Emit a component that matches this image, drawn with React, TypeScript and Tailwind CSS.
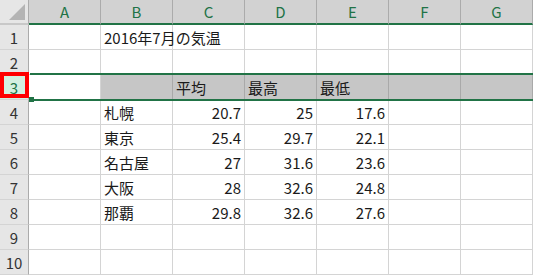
import React from "react";

const cols = ["A", "B", "C", "D", "E", "F", "G"];

type Row = (string | number | null)[];

const data: Row[] = [
  [null, "2016年7月の気温", null, null, null, null, null],
  [null, null, null, null, null, null, null],
  [null, null, "平均", "最高", "最低", null, null],
  [null, "札幌", 20.7, 25, 17.6, null, null],
  [null, "東京", 25.4, 29.7, 22.1, null, null],
  [null, "名古屋", 27, 31.6, 23.6, null, null],
  [null, "大阪", 28, 32.6, 24.8, null, null],
  [null, "那覇", 29.8, 32.6, 27.6, null, null],
  [null, null, null, null, null, null, null],
  [null, null, null, null, null, null, null],
];

export default function App() {
  return (
    <div
      className="relative w-[533px] h-[275px] overflow-hidden bg-white text-[15px] text-[#1a1a1a]"
      style={{ fontFamily: '"Noto Sans CJK JP", "Liberation Sans", sans-serif' }}
    >
      {/* column header */}
      <div className="flex h-[25px]">
        <div className="relative w-[29px] h-[25px] bg-[#e6e6e6] border-r border-b-2 border-r-[#ababab] border-b-[#c8c8c8]">
          <svg className="absolute left-0 top-0" width="28" height="23" viewBox="0 0 28 23">
            <polygon points="25,4 25,20 9,20" fill="#b4b4b4" />
          </svg>
        </div>
        {cols.map((c) => (
          <div
            key={c}
            className="w-[72px] h-[25px] bg-[#d2d2d2] border-r border-r-[#ababab] border-b-2 border-b-[#217346] flex items-center justify-center text-[#217346] leading-none"
          >
            {c}
          </div>
        ))}
      </div>

      {data.map((row, ri) => {
        const sel = ri === 2;
        return (
          <div key={ri} className="flex h-[25px]">
            <div
              className={
                sel
                  ? "w-[29px] h-[25px] shrink-0 bg-[#d3f0e0] border-r border-b border-r-[#ababab] border-b-[#d4d4d4] flex items-center justify-center text-[#217346] leading-none"
                  : "w-[29px] h-[25px] shrink-0 bg-[#e6e6e6] border-r border-b border-r-[#ababab] border-b-[#d4d4d4] flex items-center justify-center text-[#333333] leading-none"
              }
            >
              {ri + 1}
            </div>
            {row.map((v, ci) => {
              const isNum = typeof v === "number";
              const gray = sel && ci > 0;
              return (
                <div
                  key={ci}
                  className={
                    (gray
                      ? "bg-[#c6c6c6] border-r-[#a9a9a9] border-b-[#c6c6c6] "
                      : "bg-transparent border-r-[#d4d4d4] border-b-[#d4d4d4] ") +
                    "w-[72px] h-[25px] shrink-0 border-r border-b flex items-center whitespace-nowrap leading-none " +
                    (isNum ? "justify-end pr-[3px]" : "justify-start pl-[3px]")
                  }
                >
                  {v === null ? "" : String(v)}
                </div>
              );
            })}
          </div>
        );
      })}

      {/* selection overlays */}
      <div className="absolute left-[30px] right-0 top-[73px] h-[2px] bg-[#217346]" />
      <div className="absolute left-[34px] right-0 top-[99px] h-[2px] bg-[#217346]" />
      <div className="absolute left-[29px] top-[97px] w-[5px] h-[5px] bg-[#217346]" />
      <div className="absolute left-0 top-[72px] w-[29px] h-[26px] border-4 border-[#ff0000]" />
    </div>
  );
}
